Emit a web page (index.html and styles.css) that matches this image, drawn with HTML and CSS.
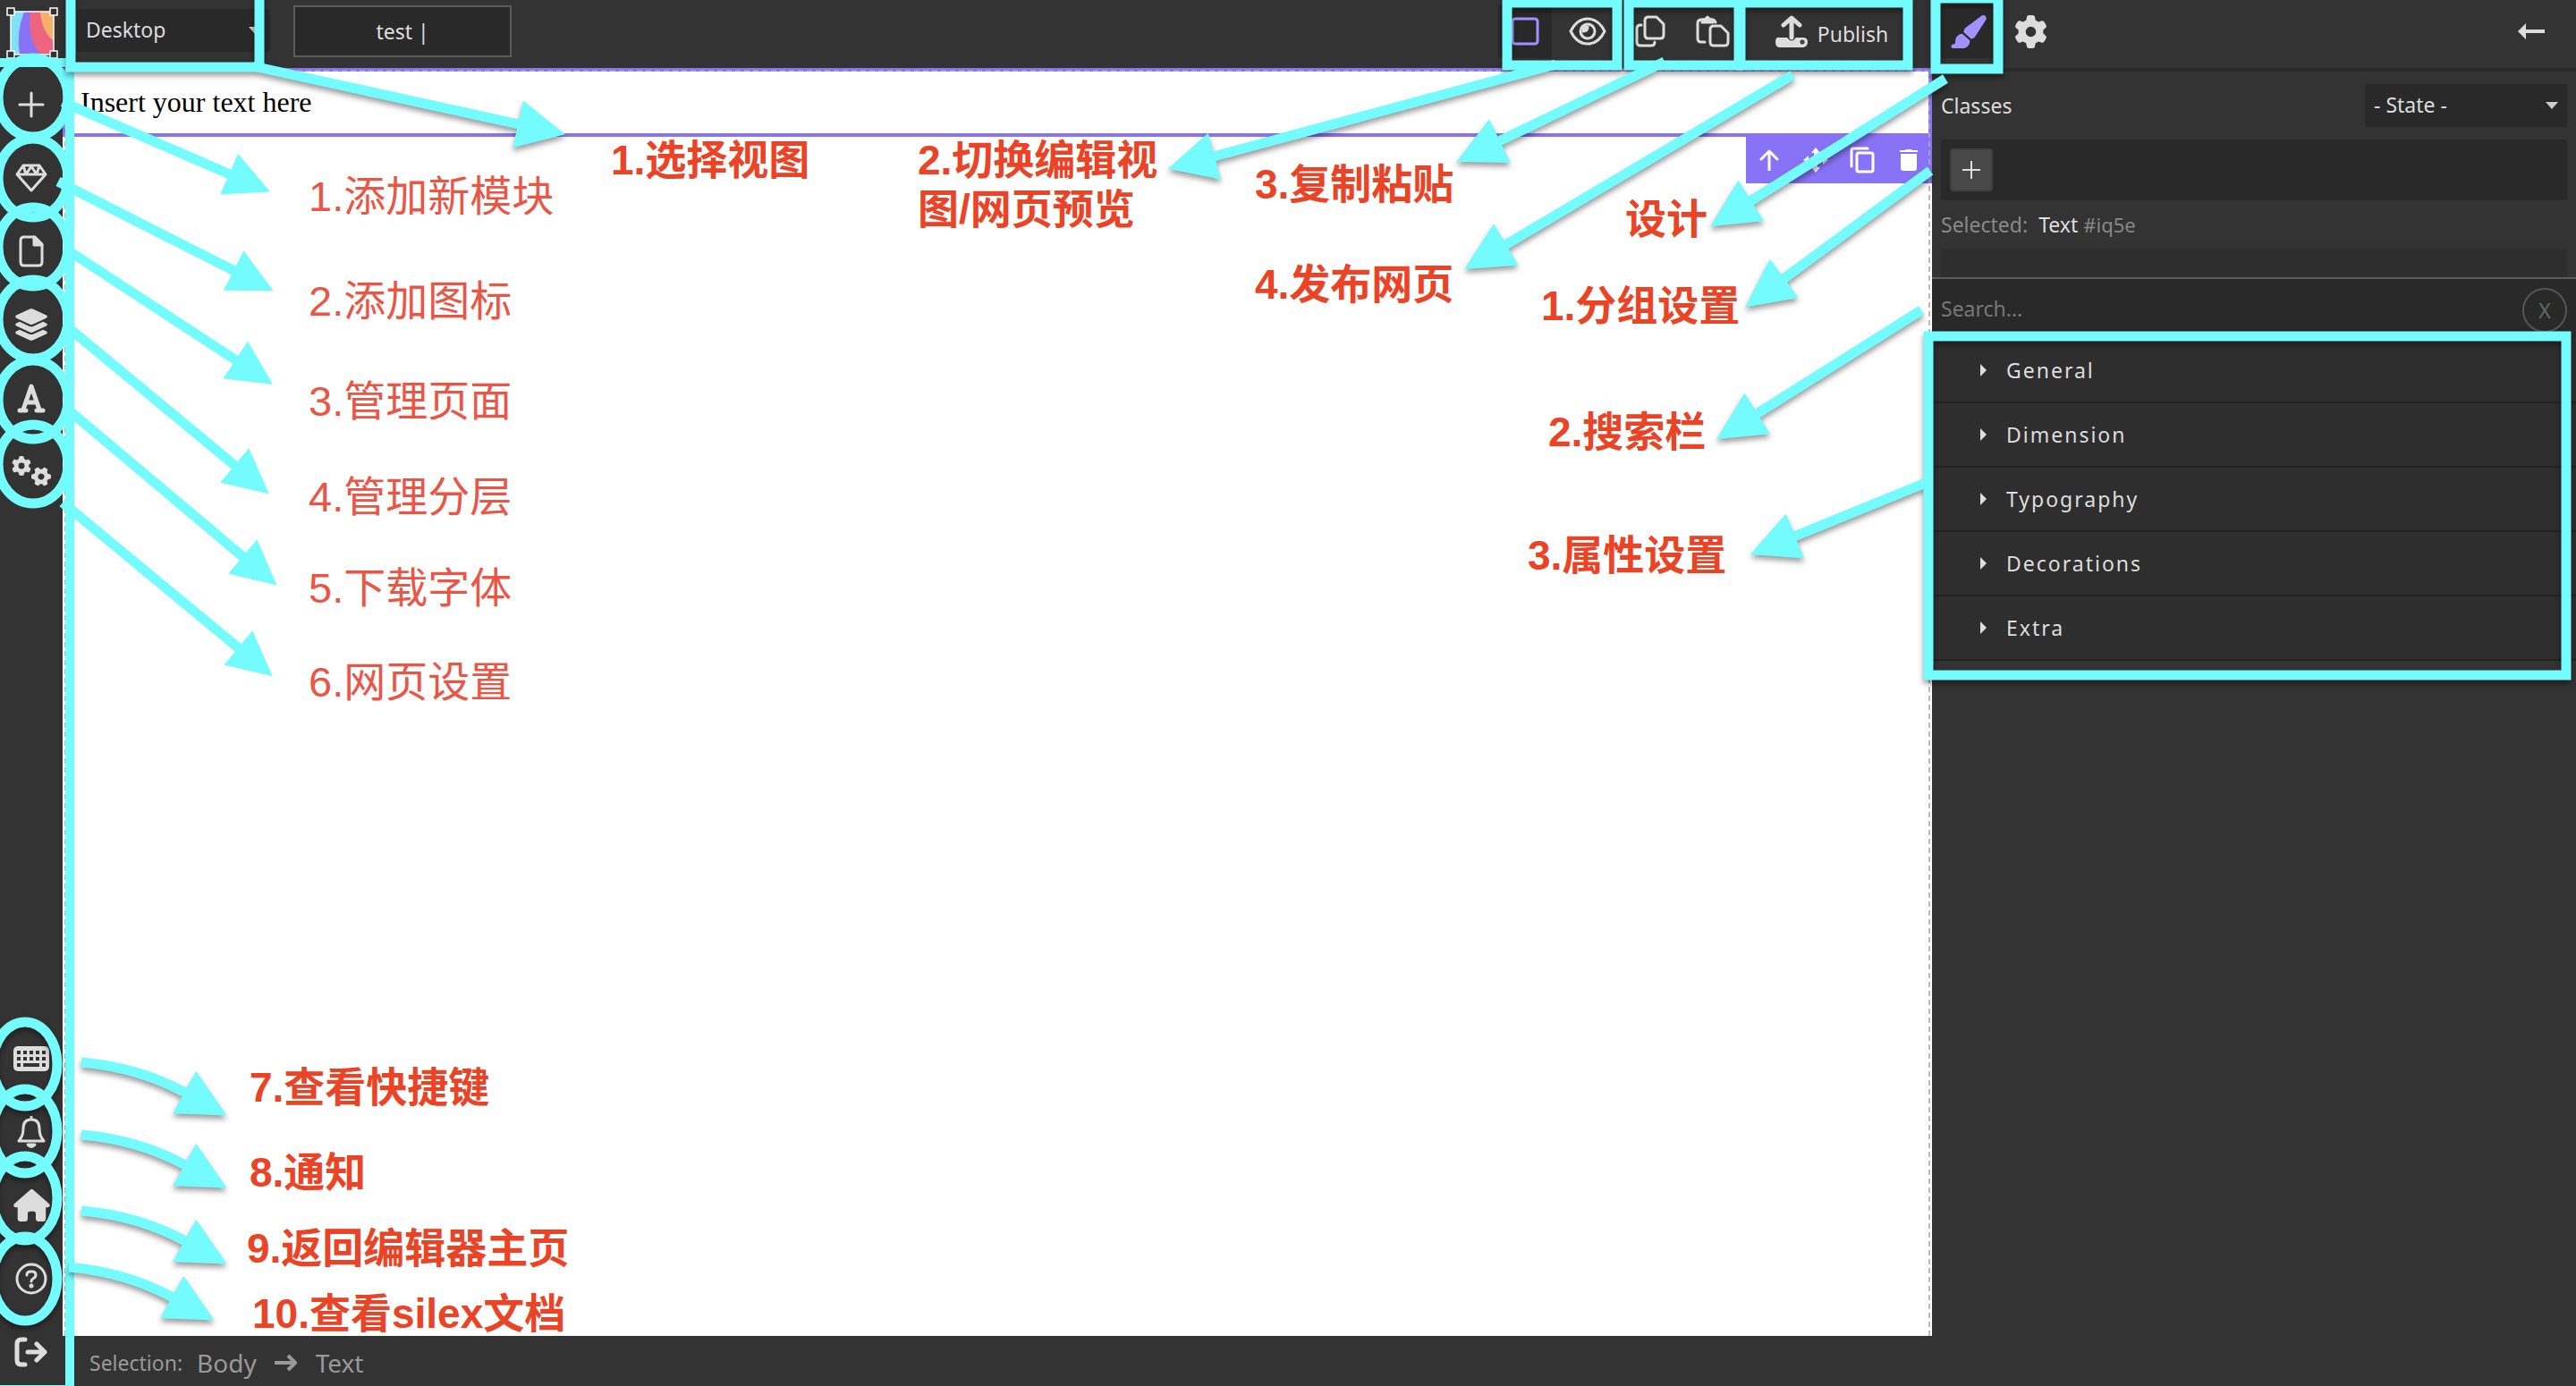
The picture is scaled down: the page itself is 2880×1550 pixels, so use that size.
FILE: index.html
```html
<!DOCTYPE html>
<html lang="zh-CN">
<head>
<meta charset="utf-8">
<title>Silex editor guide</title>
<link rel="stylesheet" href="styles.css">
</head>
<body>
<svg class="defs" aria-hidden="true">
  <symbol id="gear" viewBox="0 0 512 512"><path d="M495.9 166.6c3.2 8.7 .5 18.4-6.4 24.6l-43.3 39.4c1.1 8.3 1.7 16.8 1.7 25.4s-.6 17.1-1.7 25.4l43.3 39.4c6.9 6.2 9.6 15.9 6.4 24.6c-4.4 11.9-9.7 23.3-15.8 34.3l-4.7 8.1c-6.6 11-14 21.4-22.1 31.2c-5.9 7.2-15.7 9.6-24.5 6.8l-55.7-17.7c-13.4 10.3-28.2 18.9-44 25.4l-12.5 57.1c-2 9.1-9 16.3-18.2 17.8c-13.8 2.3-28 3.5-42.5 3.5s-28.7-1.2-42.5-3.5c-9.2-1.5-16.2-8.7-18.2-17.8l-12.5-57.1c-15.8-6.5-30.6-15.1-44-25.4L83.1 425.9c-8.8 2.8-18.6 .3-24.5-6.8c-8.1-9.8-15.5-20.2-22.1-31.2l-4.7-8.1c-6.1-11-11.4-22.4-15.8-34.3c-3.2-8.7-.5-18.4 6.4-24.6l43.3-39.4C64.6 273.1 64 264.6 64 256s.6-17.1 1.7-25.4L22.4 191.2c-6.9-6.2-9.6-15.9-6.4-24.6c4.4-11.9 9.7-23.3 15.8-34.3l4.7-8.1c6.6-11 14-21.4 22.1-31.2c5.9-7.2 15.7-9.6 24.5-6.8l55.7 17.7c13.4-10.3 28.2-18.9 44-25.4l12.5-57.1c2-9.1 9-16.3 18.2-17.8C227.3 1.2 241.5 0 256 0s28.7 1.2 42.5 3.5c9.2 1.5 16.2 8.7 18.2 17.8l12.5 57.1c15.8 6.5 30.6 15.1 44 25.4l55.7-17.7c8.8-2.8 18.6-.3 24.5 6.8c8.1 9.8 15.5 20.2 22.1 31.2l4.7 8.1c6.1 11 11.4 22.4 15.8 34.3zM256 336a80 80 0 1 0 0-160 80 80 0 1 0 0 160z"/></symbol>
  <marker id="head" viewBox="0 0 54 54" markerWidth="54" markerHeight="54" refX="1" refY="27" orient="auto" markerUnits="userSpaceOnUse"><path class="tip" d="M0 0L54 27L0 54Z"/></marker>
  <marker id="head-small" viewBox="0 0 50 50" markerWidth="50" markerHeight="50" refX="1" refY="25" orient="auto" markerUnits="userSpaceOnUse"><path class="tip" d="M0 0L50 25L0 50Z"/></marker>
</svg>

<div class="editor">
  <aside class="rail">
    <a class="logo" href="#" aria-label="Silex">
      <svg width="60" height="60" viewBox="0 0 60 60">
        <path fill="#7fe0fb" d="M6 7H54V55H6Z"/>
        <path fill="#8873f6" d="M21 7H54V55H16Q12 30 21 7Z"/>
        <path fill="#ee6480" d="M28 7H54V55H39Q24 36 28 7Z"/>
        <path fill="#f5b06a" d="M39 7H54V40Q40 28 39 7Z"/>
        <path fill="none" stroke="#fff" stroke-width="1.5" d="M6 7H54V55H6Z"/>
        <g fill="#333" stroke="#fff" stroke-width="1.5"><path d="M2 3h8v8h-8zM50 3h8v8h-8zM2 51h8v8h-8zM50 51h8v8h-8z"/></g>
      </svg>
    </a>
    <nav class="rail-group">
      <button class="rail-button" aria-label="Add block"><svg class="line" width="30" height="30" viewBox="0 0 30 30"><path d="M15 2V28M2 15H28"/></svg></button>
      <button class="rail-button" aria-label="Symbols"><svg class="line" width="38" height="34" viewBox="0 0 38 34"><path d="M10 3H28L35 13L19 31L3 13ZM3 13H35M10 3L13 13L19 4L25 13L28 3"/></svg></button>
      <button class="rail-button" aria-label="Pages"><svg class="line" width="28" height="36" viewBox="0 0 28 36"><path d="M6 2H18L26 10V30Q26 34 22 34H6Q2 34 2 30V6Q2 2 6 2Z"/><path class="solid" d="M17 2V11H26Z"/></svg></button>
      <button class="rail-button" aria-label="Layers"><svg class="fill" width="40" height="36" viewBox="0 0 576 512"><path d="M264.5 5.2c14.9-6.9 32.1-6.9 47 0l218.6 101c8.5 3.9 13.9 12.4 13.9 21.8s-5.4 17.9-13.9 21.8l-218.6 101c-14.9 6.9-32.1 6.9-47 0L45.9 149.8C37.4 145.8 32 137.3 32 128s5.4-17.9 13.9-21.8L264.5 5.2zM476.9 209.6l53.2 24.6c8.5 3.9 13.9 12.4 13.9 21.8s-5.4 17.9-13.9 21.8l-218.6 101c-14.9 6.9-32.1 6.9-47 0L45.9 277.8C37.4 273.8 32 265.3 32 256s5.4-17.9 13.9-21.8l53.2-24.6 152 70.2c23.4 10.8 50.4 10.8 73.8 0l152-70.2zm-152 198.2l152-70.2 53.2 24.6c8.5 3.9 13.9 12.4 13.9 21.8s-5.4 17.9-13.9 21.8l-218.6 101c-14.9 6.9-32.1 6.9-47 0L45.9 405.8C37.4 401.8 32 393.3 32 384s5.4-17.9 13.9-21.8l53.2-24.6 152 70.2c23.4 10.8 50.4 10.8 73.8 0z"/></svg></button>
      <button class="rail-button" aria-label="Fonts"><svg class="line bold" width="32" height="34" viewBox="0 0 32 34"><path d="M7 30L16 4L25 30M10 22H22M3 31H10M22 31H29"/></svg></button>
      <button class="rail-button" aria-label="Settings"><svg class="fill" width="46" height="38" viewBox="0 0 46 38"><use href="#gear" x="1" y="1" width="22" height="24"/><use href="#gear" x="22" y="14" width="24" height="22" transform="rotate(30 34 25)"/></svg></button>
    </nav>
    <nav class="rail-group rail-group-end">
      <button class="rail-button" aria-label="Shortcuts"><svg class="fill" width="40" height="28" viewBox="0 0 40 28"><rect width="40" height="28" rx="5"/><path stroke="#333" stroke-width="4" stroke-dasharray="4 3" d="M4 7H36M4 14H36"/><path stroke="#333" stroke-width="4" d="M4 21H8M11 21H29M32 21H36"/></svg></button>
      <button class="rail-button" aria-label="Notifications"><svg class="line" width="32" height="36" viewBox="0 0 32 36"><path d="M16 4C9 4 7 9 7 14C7 21 5 24 2 28H30C27 24 25 21 25 14C25 9 23 4 16 4ZM16 1V4"/><path class="solid" d="M12 32H20Q16 37 12 32Z"/></svg></button>
      <button class="rail-button" aria-label="Home"><svg class="fill" width="41" height="36" viewBox="0 0 576 512"><path d="M575.8 255.5c0 18-15 32.1-32 32.1h-32l.7 160.2c0 2.7-.2 5.4-.5 8.1V472c0 22.1-17.9 40-40 40H392c-22.1 0-40-17.9-40-40V384c0-17.7-14.3-32-32-32H256c-17.7 0-32 14.3-32 32v88c0 22.1-17.9 40-40 40H104c-22.1 0-40-17.9-40-40V287.6H32c-18 0-32-14-32-32.1c0-9 3-17 10-24L266.4 8c7-7 15-8 22-8s15 2 21 7L564.8 231.5c8 7 12 15 11 24z"/></svg></button>
      <button class="rail-button" aria-label="Help"><svg class="line" width="36" height="36" viewBox="0 0 36 36"><circle cx="18" cy="18" r="16"/><path d="M13 14Q13 10 17 10H19Q23 10 23 14Q23 16 20 18Q18 19 18 21"/><circle class="solid" cx="18" cy="26" r="1"/></svg></button>
      <button class="rail-button" aria-label="Log out"><svg class="line bold" width="38" height="34" viewBox="0 0 38 34"><path d="M12 3H8Q3 3 3 8V26Q3 31 8 31H12M15 17H34M25 8L34 17L25 26"/></svg></button>
    </nav>
  </aside>

  <main class="work">
    <header class="topbar">
      <div class="select-wrap device"><select aria-label="Device"><option>Desktop</option></select></div>
      <input class="site-name" type="text" value="test |" aria-label="Site name">
      <div class="options">
        <button class="tool active" aria-label="Edit view"><svg class="line" width="32" height="32" viewBox="0 0 32 32"><rect x="2" y="2" width="28" height="28" rx="3"/></svg></button>
        <button class="tool" aria-label="Preview"><svg class="line" width="42" height="34" viewBox="0 0 42 34"><path d="M2 17Q9 3 21 3T40 17Q33 31 21 31T2 17Z"/><circle cx="21" cy="17" r="8"/><path class="solid" d="M16 17Q21 17 21 12Q16 12 16 17Z"/></svg></button>
        <button class="tool" aria-label="Copy"><svg class="line" width="34" height="36" viewBox="0 0 34 36"><path d="M15 2H24L32 10V22Q32 26 28 26H15Q11 26 11 22V6Q11 2 15 2ZM7 11H6Q2 11 2 15V30Q2 34 6 34H18Q22 34 22 30"/></svg></button>
        <button class="tool" aria-label="Paste"><svg class="line" width="38" height="36" viewBox="0 0 38 36"><path d="M20 12H28L36 20V30Q36 34 32 34H20Q16 34 16 30V16Q16 12 20 12ZM10 30H6Q2 30 2 26V9Q2 5 6 5H18Q21 5 22 8"/><path class="solid" d="M7 5H10L13 2L16 5H19V8H7Z"/></svg></button>
        <button class="tool publish"><svg class="line" width="38" height="36" viewBox="0 0 38 36"><path class="bold" d="M19 25V4M10 11L19 3L28 11"/><path class="fillbox" d="M6 25H14Q19 32 24 25H32Q37 25 37 30T32 36H6Q1 36 1 30T6 25Z"/><circle cx="31" cy="30" r="1" stroke="#333"/></svg><span>Publish</span></button>
      </div>
    </header>

    <section class="canvas">
      <div class="text-block">Insert your text here</div>
      <div class="block-tools">
        <button aria-label="Select parent"><svg class="line" width="24" height="24" viewBox="0 0 24 24"><path d="M12 23V2M3 11L12 2L21 11"/></svg></button>
        <button aria-label="Move"><svg class="fill" width="28" height="28" viewBox="0 0 28 28"><path d="M14 0L19 6H16V12H22V9L28 14L22 19V16H16V22H19L14 28L9 22H12V16H6V19L0 14L6 9V12H12V6H9Z"/></svg></button>
        <button aria-label="Duplicate"><svg class="line" width="28" height="30" viewBox="0 0 28 30"><rect x="8" y="7" width="18" height="21" rx="2"/><path d="M20 2H4Q2 2 2 4V22"/></svg></button>
        <button aria-label="Delete"><svg class="fill" width="20" height="26" viewBox="0 0 20 26"><path d="M1 6H19V22Q19 25 16 25H4Q1 25 1 22ZM0 2H6L7 1H13L14 2H20V4H0Z"/></svg></button>
      </div>
    </section>

    <footer class="crumbs">
      <span class="crumbs-label">Selection:</span>
      <a href="#">Body</a>
      <svg class="line" width="26" height="20" viewBox="0 0 26 20"><path d="M0 10H23M15 2L23 10L15 18"/></svg>
      <a href="#">Text</a>
    </footer>
  </main>

  <aside class="panel">
    <header class="panel-bar">
      <button class="tool active" aria-label="Design"><svg class="fill" width="42" height="37" viewBox="0 0 576 512"><path d="M339.3 367.1c27.3-3.9 51.9-19.4 67.2-42.9L568.2 74.1c12.6-19.5 9.4-45.3-7.6-61.2S517.7-4.4 499.1 9.6L262.4 187.2c-24 18-38.2 46.1-38.4 76.1L339.3 367.1zm-19.6 25.4l-116-104.4C143.9 290.3 96 339.6 96 400c0 3.9 .2 7.8 .6 11.6C98.4 429.1 86.4 448 68.8 448H64c-17.7 0-32 14.3-32 32s14.3 32 32 32H208c61.9 0 112-50.1 112-112c0-2.5-.1-5-.2-7.5z"/></svg></button>
      <button class="tool" aria-label="Properties"><svg class="fill" width="37" height="37"><use href="#gear"/></svg></button>
      <button class="tool collapse" aria-label="Collapse panel"><svg class="fill" width="30" height="18" viewBox="0 0 30 18"><path d="M0 9L9 0V7H30V11H9V18Z"/></svg></button>
    </header>
    <section class="classes">
      <div class="classes-head">
        <label for="state">Classes</label>
        <div class="select-wrap state"><select id="state"><option>- State -</option></select></div>
      </div>
      <div class="class-list"><button class="add-class" aria-label="Add class"><svg class="line" width="20" height="20" viewBox="0 0 20 20"><path d="M10 0V20M0 10H20"/></svg></button></div>
      <p class="selected"><span>Selected:</span> <b>Text</b> <small>#iq5e</small></p>
      <div class="strip"></div>
    </section>
    <div class="search">
      <input type="text" placeholder="Search..." aria-label="Search properties">
      <button aria-label="Clear search">X</button>
    </div>
    <div class="sectors">
      <button>General</button>
      <button>Dimension</button>
      <button>Typography</button>
      <button>Decorations</button>
      <button>Extra</button>
    </div>
  </aside>

  <div class="rail-outline"></div>

  <svg class="notes notes-left" width="1280" height="820" viewBox="0 0 1280 820">
    <g class="ink">
      <ellipse cx="37" cy="109" rx="39" ry="44"/>
      <ellipse cx="37" cy="199" rx="39" ry="44"/>
      <ellipse cx="37" cy="276" rx="39" ry="44"/>
      <ellipse cx="37" cy="357" rx="39" ry="44"/>
      <ellipse cx="37" cy="447" rx="39" ry="44"/>
      <ellipse cx="37" cy="519" rx="39" ry="44"/>
      <path d="M70 114L257 195" marker-end="url(#head-small)"/>
      <path d="M65 203L262 303" marker-end="url(#head-small)"/>
      <path d="M76 280L264 403" marker-end="url(#head-small)"/>
      <path d="M76 366L263 521" marker-end="url(#head-small)"/>
      <path d="M76 458L272 623" marker-end="url(#head-small)"/>
      <path d="M70 562L267 725" marker-end="url(#head-small)"/>
    </g>
    <g class="ink lifted">
      <path d="M79 -8V75H290V-8"/>
      <path d="M283 74L580 139" marker-end="url(#head)"/>
    </g>
    <g class="caption light">
      <text x="345" y="236">1.添加新模块</text>
      <text x="345" y="353">2.添加图标</text>
      <text x="345" y="465">3.管理页面</text>
      <text x="345" y="572">4.管理分层</text>
      <text x="345" y="674">5.下载字体</text>
      <text x="345" y="779">6.网页设置</text>
    </g>
    <text class="caption" x="683" y="195">1.选择视图</text>
  </svg>

  <svg class="notes notes-right" width="1880" height="800" viewBox="1000 0 1880 800">
    <g class="ink lifted">
      <rect x="1685" y="3" width="123" height="70"/>
      <rect x="1821" y="3" width="123" height="70"/>
      <rect x="1946" y="3" width="187" height="70"/>
      <rect x="2164" y="-2" width="70" height="79"/>
      <rect x="2156" y="376" width="713" height="379"/>
      <path d="M1739 72L1357 175" marker-end="url(#head)"/>
      <path d="M1861 69L1676 158" marker-end="url(#head)"/>
      <path d="M2004 84L1683 274" marker-end="url(#head)"/>
      <path d="M2175 88L1957 225" marker-end="url(#head)"/>
      <path d="M2158 191L1994 312" marker-end="url(#head)"/>
      <path d="M2148 347L1964 463" marker-end="url(#head)"/>
      <path d="M2153 540L2006 600" marker-end="url(#head)"/>
    </g>
    <g class="caption">
      <text x="1026" y="195">2.切换编辑视</text>
      <text x="1026" y="250">图/网页预览</text>
      <text x="1403" y="222">3.复制粘贴</text>
      <text x="1403" y="334">4.发布网页</text>
      <text x="1817" y="261">设计</text>
      <text x="1723" y="358">1.分组设置</text>
      <text x="1731" y="499">2.搜索栏</text>
      <text x="1708" y="637">3.属性设置</text>
    </g>
  </svg>

  <svg class="notes notes-bottom" width="700" height="450" viewBox="0 1100 700 450">
    <g class="ink lifted">
      <ellipse cx="28" cy="1190" rx="36" ry="47"/>
      <ellipse cx="28" cy="1265" rx="36" ry="47"/>
      <ellipse cx="28" cy="1340" rx="36" ry="47"/>
      <ellipse cx="28" cy="1430" rx="36" ry="47"/>
      <path d="M91 1188Q156 1194 207 1222" marker-end="url(#head)"/>
      <path d="M91 1269Q156 1275 207 1303" marker-end="url(#head)"/>
      <path d="M91 1354Q156 1360 207 1388" marker-end="url(#head)"/>
      <path d="M77 1417Q142 1423 193 1451" marker-end="url(#head)"/>
    </g>
    <g class="caption">
      <text x="279" y="1232">7.查看快捷键</text>
      <text x="279" y="1327">8.通知</text>
      <text x="276" y="1412">9.返回编辑器主页</text>
      <text x="282" y="1485">10.查看silex文档</text>
    </g>
  </svg>
</div>
</body>
</html>
```
FILE: styles.css
```css
* { box-sizing: border-box; }

body {
  margin: 0;
  background: #333;
  color: #ddd;
  font: 23px/30px "Noto Sans", "Noto Sans CJK SC", sans-serif;
}

button, input, select { font: inherit; color: inherit; border: 0; margin: 0; }
button { background: none; padding: 0; display: flex; align-items: center; justify-content: center; }
a { color: inherit; text-decoration: none; }

.defs { position: absolute; width: 0; height: 0; }
.fill { fill: currentColor; }
.line { fill: none; stroke: currentColor; stroke-width: 3; stroke-linejoin: round; stroke-linecap: round; }
.line .solid { fill: currentColor; }
.line .fillbox { fill: currentColor; stroke: none; }
.bold { stroke-width: 5; }

.editor {
  position: relative;
  display: grid;
  grid-template-columns: 70px 1fr 25%;
  min-height: 100vh;
  overflow: hidden;
}

/* left rail */
.rail { display: flex; flex-direction: column; }
.logo { height: 79px; padding: 6px; }
.rail-group { display: flex; flex-direction: column; gap: 6px; }
.rail-group-end { margin-top: auto; }
.rail-button { height: 76px; width: 70px; }

/* middle column */
.work { display: flex; flex-direction: column; min-width: 0; }
.topbar { height: 76px; display: flex; align-items: flex-start; padding: 5px 20px 0 16px; }
.select-wrap { position: relative; height: 48px; background: #292929; border-radius: 4px; }
.select-wrap select { appearance: none; background: none; width: 100%; height: 46px; padding: 0 10px; }
.select-wrap::after {
  content: "";
  position: absolute;
  right: 10px;
  top: 20px;
  border: 7px solid transparent;
  border-top: 8px solid #ccc;
  border-bottom: 0;
}
.device { width: 216px; margin: 5px 26px 0 0; }
.site-name { width: 244px; height: 58px; margin-top: 1px; padding: 0; background: #292929; border: 2px solid #5b5b5b; text-align: center; }
.options { display: flex; gap: 10px; margin-left: auto; }
.tool { width: 60px; height: 60px; border-radius: 4px; }
.active { background: #292929; color: #a291ff; }
.publish { width: 185px; gap: 10px; }
.publish span { padding-top: 6px; }

.canvas { position: relative; flex: 1; background: #fff; color: #000; }
.canvas::after {
  content: "";
  position: absolute;
  inset: 2px 2px 0;
  border: 2px dashed rgba(170, 170, 170, .8);
  border-bottom: 0;
  pointer-events: none;
}
.text-block {
  height: 77px;
  padding: 15px 16px;
  border: 4px solid #8873f6;
  font: 32px/38px "Liberation Serif", serif;
}
.block-tools { position: absolute; right: 0; top: 73px; display: flex; background: #8873f6; color: #fff; }
.block-tools button { width: 52px; height: 56px; padding-top: 4px; }

.crumbs { height: 56px; padding: 4px 30px 0; display: flex; align-items: center; gap: 20px; color: #999; font-size: 28px; }
.crumbs-label { font-size: 23px; margin-right: -4px; }
.crumbs .line { stroke-width: 4; stroke-linecap: butt; }

/* right panel */
.panel-bar { height: 80px; display: flex; align-items: flex-start; gap: 10px; padding: 5px 20px 0 10px; border-bottom: 4px solid #292929; }
.collapse { margin-left: auto; }
.classes { padding: 14px 10px 0; border-bottom: 2px solid #5b5b5b; }
.classes-head { display: flex; align-items: center; justify-content: space-between; }
.state { width: 226px; }
.class-list { height: 68px; margin-top: 14px; padding: 10px; background: #292929; border-radius: 4px; }
.add-class { width: 48px; height: 48px; background: #484848; border: 2px solid #404040; border-radius: 4px; }
.add-class .line { stroke-width: 2; }
.selected { margin: 12px 0; color: #888; }
.selected span { margin-right: 6px; }
.selected b { color: #ddd; font-weight: 400; }
.selected small { font-size: 22px; }
.strip { height: 32px; background: #2e2e2e; }
.search { height: 67px; padding: 10px; display: flex; align-items: flex-start; background: #292929; }
.search input { flex: 1; height: 46px; padding: 0; background: none; }
.search input::placeholder { color: #777; }
.search button { width: 50px; height: 50px; border: 2px solid #555; border-radius: 50%; color: #666; }
.sectors button {
  width: 100%;
  height: 72px;
  justify-content: flex-start;
  gap: 22px;
  padding-left: 54px;
  background: #2e2e2e;
  border-bottom: 2px solid #222;
  letter-spacing: 2px;
}
.sectors button::before { content: ""; border: 7px solid transparent; border-left: 7px solid #ddd; border-right: 0; }

/* guide drawn over the editor */
.rail-outline {
  position: absolute;
  left: 0;
  top: 65px;
  bottom: 0;
  width: 83px;
  border: solid #73fbfd;
  border-width: 10px 10px 1px 0;
  pointer-events: none;
}
.notes { position: absolute; pointer-events: none; }
.notes-left { left: 0; top: 0; }
.notes-right { right: 0; top: 0; }
.notes-bottom { left: 0; bottom: 0; }
.ink { fill: none; stroke: #73fbfd; stroke-width: 11; }
.lifted { filter: drop-shadow(0 4px 3px rgba(0, 0, 0, .4)); }
.tip { fill: #73fbfd; stroke: none; }
.caption { fill: #ea4325; font: 700 46px "Liberation Sans", "Noto Sans CJK SC", sans-serif; }
.light { fill: #eb5545; font-weight: 400; font-size: 47px; }
```
